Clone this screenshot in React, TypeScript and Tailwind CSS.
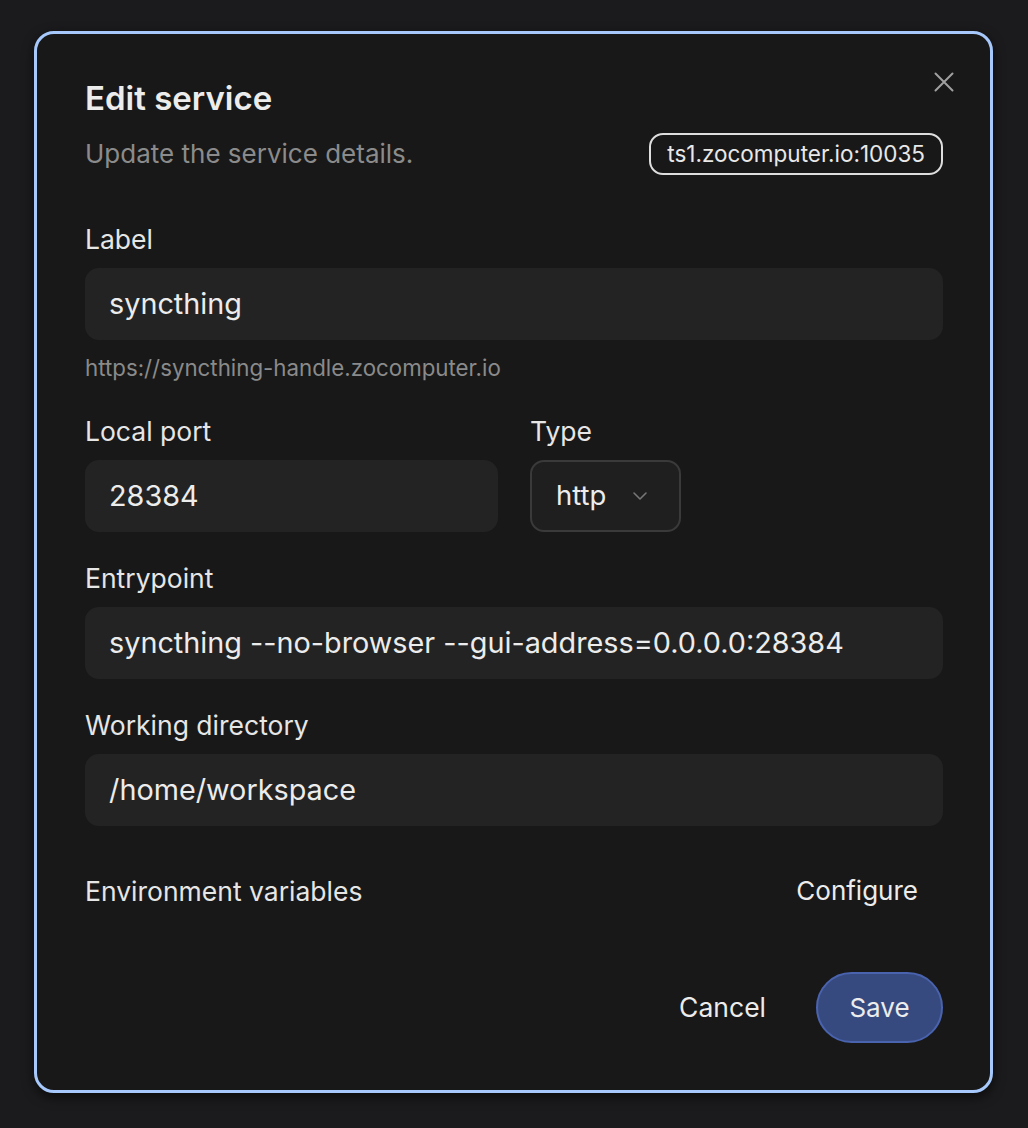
import { ChevronDown } from 'lucide-react';

const FONT = { fontFamily: 'Inter, "Noto Sans", sans-serif' };

function Field({ label, value, className = '' }: { label: string; value: string; className?: string }) {
  return (
    <div className={className}>
      <div className="text-[26.5px] leading-[28px] text-[#e6e6e6]">{label}</div>
      <div className="mt-[15px] flex h-[72px] items-center rounded-[14px] bg-[#232323] px-6 text-[28.8px] text-[#ececec]">
        {value}
      </div>
    </div>
  );
}

export default function App() {
  return (
    <div className="min-h-screen bg-[#1b1b1d] pl-[34px] pt-[31px]" style={FONT}>
      <div className="relative h-[1062px] w-[959px] rounded-[20px] border-[3px] border-[#a6c8fb] bg-[#181818] pl-12 pr-[47px] pt-[46px] shadow-[0_4px_12px_rgba(0,0,0,0.6)]">
        <button aria-label="Close" className="absolute right-[36px] top-[38px] text-[#a0a0a0]">
          <svg width="20" height="20" viewBox="0 0 20 20" fill="none" stroke="currentColor" strokeWidth="2" strokeLinecap="round">
            <path d="M1.5 1.5l17 17M18.5 1.5l-17 17" />
          </svg>
        </button>

        <h2 className="text-[33px] font-semibold leading-[36px] text-[#ececec]">Edit service</h2>

        <div className="mt-[17px] flex items-center justify-between">
          <p className="text-[26px] leading-[30px] text-[#8b8b8b]">Update the service details.</p>
          <span className="flex h-[42px] items-center rounded-[14px] border-2 border-[#dedede] px-[16px] text-[22.5px] text-[#e8e8e8]">
            ts1.zocomputer.io:10035
          </span>
        </div>

        <Field className="mt-[50px]" label="Label" value="syncthing" />
        <div className="mt-[16px] text-[22.3px] leading-[24px] text-[#8a8a8a]">https://syncthing-handle.zocomputer.io</div>

        <div className="mt-[37px] flex gap-8">
          <Field className="w-[413px]" label="Local port" value="28384" />
          <div>
            <div className="text-[26.5px] leading-[28px] text-[#e6e6e6]">Type</div>
            <div className="mt-[15px] flex h-[72px] w-[151px] items-center gap-[22px] rounded-[14px] border-2 border-[#3a3a3a] bg-[#1f1f1f] pl-[24px] text-[27.5px] text-[#ececec]">
              http
              <ChevronDown size={24} strokeWidth={1.6} className="text-[#767676]" />
            </div>
          </div>
        </div>

        <Field className="mt-[32px]" label="Entrypoint" value="syncthing --no-browser --gui-address=0.0.0.0:28384" />
        <Field className="mt-[32px]" label="Working directory" value="/home/workspace" />

        <div className="mt-[51px] flex items-center justify-between">
          <span className="text-[26.5px] leading-[28px] text-[#e6e6e6]">Environment variables</span>
          <button className="pr-[25px] text-[26px] leading-[28px] text-[#ececec]">Configure</button>
        </div>

        <div className="mt-[67px] flex items-center justify-end gap-[50px]">
          <button className="text-[26.5px] text-[#ececec]">Cancel</button>
          <button className="h-[71px] w-[127px] rounded-full border-2 border-[#4a63ae] bg-[#364a80] text-[26px] text-[#ececec]">
            Save
          </button>
        </div>
      </div>
    </div>
  );
}
